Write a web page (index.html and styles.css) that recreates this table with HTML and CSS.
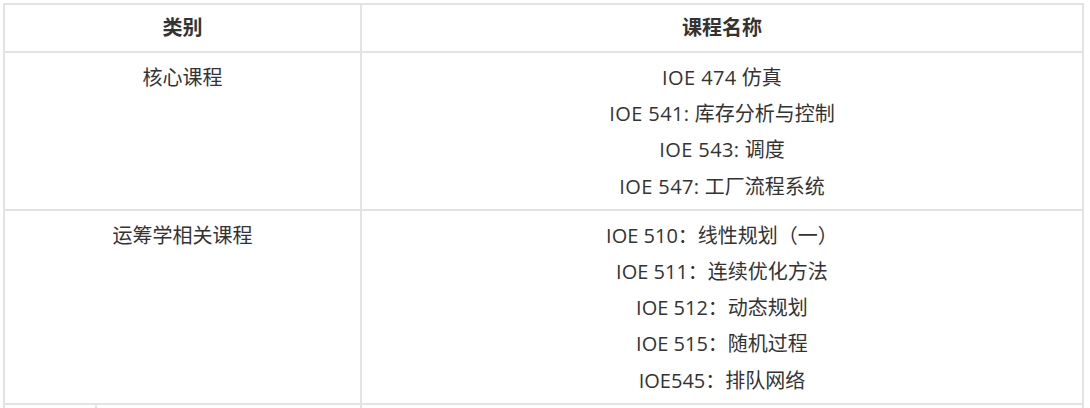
FILE: index.html
```html
<!DOCTYPE html>
<html lang="zh-CN">
<head>
<meta charset="utf-8">
<title>课程</title>
<link rel="stylesheet" href="styles.css">
</head>
<body>
<table class="courses">
  <colgroup>
    <col class="col-a">
    <col class="col-b">
    <col class="col-c">
  </colgroup>
  <thead>
    <tr class="head-row">
      <th colspan="2">类别</th>
      <th>课程名称</th>
    </tr>
  </thead>
  <tbody>
    <tr>
      <td colspan="2">核心课程</td>
      <td>
        <p><span class="code">IOE 474</span> 仿真</p>
        <p><span class="code">IOE 541:</span> 库存分析与控制</p>
        <p><span class="code">IOE 543:</span> 调度</p>
        <p><span class="code">IOE 547:</span> 工厂流程系统</p>
      </td>
    </tr>
    <tr>
      <td colspan="2">运筹学相关课程</td>
      <td>
        <p>IOE 510：线性规划（一）</p>
        <p>IOE 511：连续优化方法</p>
        <p>IOE 512：动态规划</p>
        <p>IOE 515：随机过程</p>
        <p>IOE545：排队网络</p>
      </td>
    </tr>
    <tr class="tail-row">
      <td></td>
      <td></td>
      <td></td>
    </tr>
  </tbody>
</table>
</body>
</html>
```
FILE: styles.css
```css
html, body {
  margin: 0;
  padding: 0;
  background: #ffffff;
}

body {
  padding: 3px 0 0 3px;
  font-family: "Open Sans", "Noto Sans CJK SC", sans-serif;
  font-size: 20px;
  color: #333333;
}

.courses {
  table-layout: fixed;
  width: 1081px;
  border-collapse: separate;
  border-spacing: 0;
  border-left: 2px solid #e3e3e3;
  border-top: 2px solid #e3e3e3;
}

.col-a { width: 92px; }
.col-b { width: 265px; }
.col-c { width: 722px; }

.courses th,
.courses td {
  border-right: 2px solid #e3e3e3;
  border-bottom: 2px solid #e3e3e3;
  text-align: center;
  vertical-align: top;
  padding: 7px 8px 4px;
  line-height: 36.2px;
  font-weight: 400;
}

.head-row th {
  height: 46px;
  padding: 0 8px;
  vertical-align: middle;
  font-weight: 700;
  line-height: 24px;
}

.courses p {
  margin: 0;
}

.code {
  letter-spacing: 0.4px;
}

.tail-row td {
  height: 40px;
}
```
